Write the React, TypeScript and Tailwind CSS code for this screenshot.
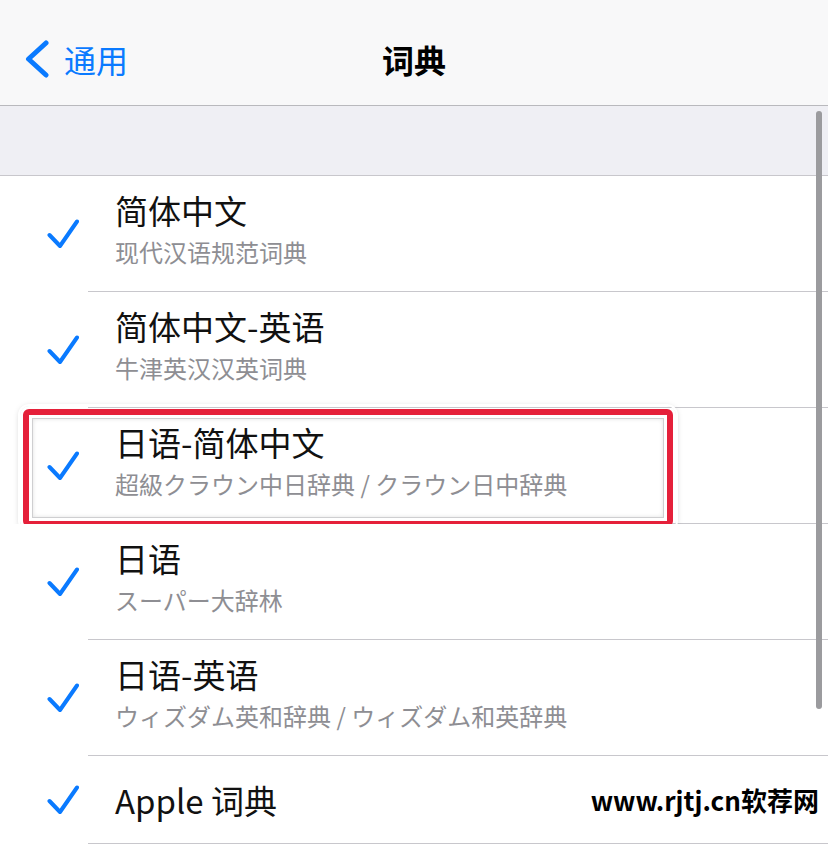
const FONT = '"Noto Sans CJK SC", "Noto Sans", sans-serif';

type Dict = {
  title: string;
  subtitle?: string;
  marked?: boolean;
};

const DICTS: Dict[] = [
  { title: "简体中文", subtitle: "现代汉语规范词典" },
  { title: "简体中文-英语", subtitle: "牛津英汉汉英词典" },
  { title: "日语-简体中文", subtitle: "超級クラウン中日辞典 / クラウン日中辞典", marked: true },
  { title: "日语", subtitle: "スーパー大辞林" },
  { title: "日语-英语", subtitle: "ウィズダム英和辞典 / ウィズダム和英辞典" },
  { title: "Apple 词典" },
];

function Check() {
  return (
    <svg width="32" height="30" viewBox="0 0 32 30" fill="none">
      <path
        d="M2.5 16 L13 27 L30 2.5"
        stroke="#0a7aff"
        strokeWidth="4"
        strokeLinecap="round"
        strokeLinejoin="round"
      />
    </svg>
  );
}

function Row({ item }: { item: Dict }) {
  return (
    <div className="relative flex bg-white">
      <div className="flex w-[88px] shrink-0 items-center pl-[47px]">
        <Check />
      </div>
      {item.subtitle ? (
        <div className="flex h-[116px] flex-1 flex-col border-b border-[#c8c7cc] pl-[27px] pt-[14px]">
          <p className="text-[33px] leading-[40px] text-[#111]">{item.title}</p>
          <p className="mt-[6px] text-[24px] leading-[32px] text-[#8e8e93]">{item.subtitle}</p>
        </div>
      ) : (
        <div className="flex h-[88px] flex-1 items-center border-b border-[#c8c7cc] pl-[27px]">
          <p className="text-[33px] leading-[40px] text-[#111]">{item.title}</p>
          <p className="ml-auto mr-[9px] text-[26px] font-bold leading-[32px] text-black">
            www.rjtj.cn软荐网
          </p>
        </div>
      )}
      {item.marked && (
        <div className="pointer-events-none absolute left-[20px] top-[-2px] h-[124px] w-[656px] rounded-[9px] p-[3px] shadow-[0_0_0_2px_#ffffff,0_1px_6px_rgba(0,0,0,0.25)]">
          <div className="h-full w-full rounded-[6px] border-[6px] border-[#e5203a] p-[3px]">
            <div className="h-full w-full border border-[#cfcfd1] shadow-[inset_0_0_4px_rgba(0,0,0,0.12)]" />
          </div>
        </div>
      )}
    </div>
  );
}

export default function App() {
  return (
    <div
      className="relative h-[846px] w-[828px] overflow-hidden bg-white"
      style={{ fontFamily: FONT }}
    >
      <div className="grid h-[106px] grid-cols-[1fr_auto_1fr] border-b border-[#b9b9bd] bg-[#f8f8f9] pt-[39px]">
        <div className="flex h-[40px] items-center pl-[24px]">
          <svg width="27" height="38" viewBox="0 0 27 38" fill="none">
            <path
              d="M22 3 L4.5 19 L22 35"
              stroke="#0a7aff"
              strokeWidth="5"
              strokeLinecap="round"
              strokeLinejoin="round"
            />
          </svg>
          <span className="ml-[13px] text-[32px] leading-[40px] text-[#0a7aff]">通用</span>
        </div>
        <h1 className="text-[32px] font-bold leading-[40px] text-black">词典</h1>
        <div />
      </div>

      <div className="h-[70px] border-b border-[#c8c7cc] bg-[#efeff4]" />

      <div className="flex flex-col">
        {DICTS.map((d) => (
          <Row key={d.title} item={d} />
        ))}
      </div>

      <div className="absolute left-[816px] top-[111px] h-[598px] w-[6px] rounded-full bg-[#9b9b9e]" />
    </div>
  );
}
